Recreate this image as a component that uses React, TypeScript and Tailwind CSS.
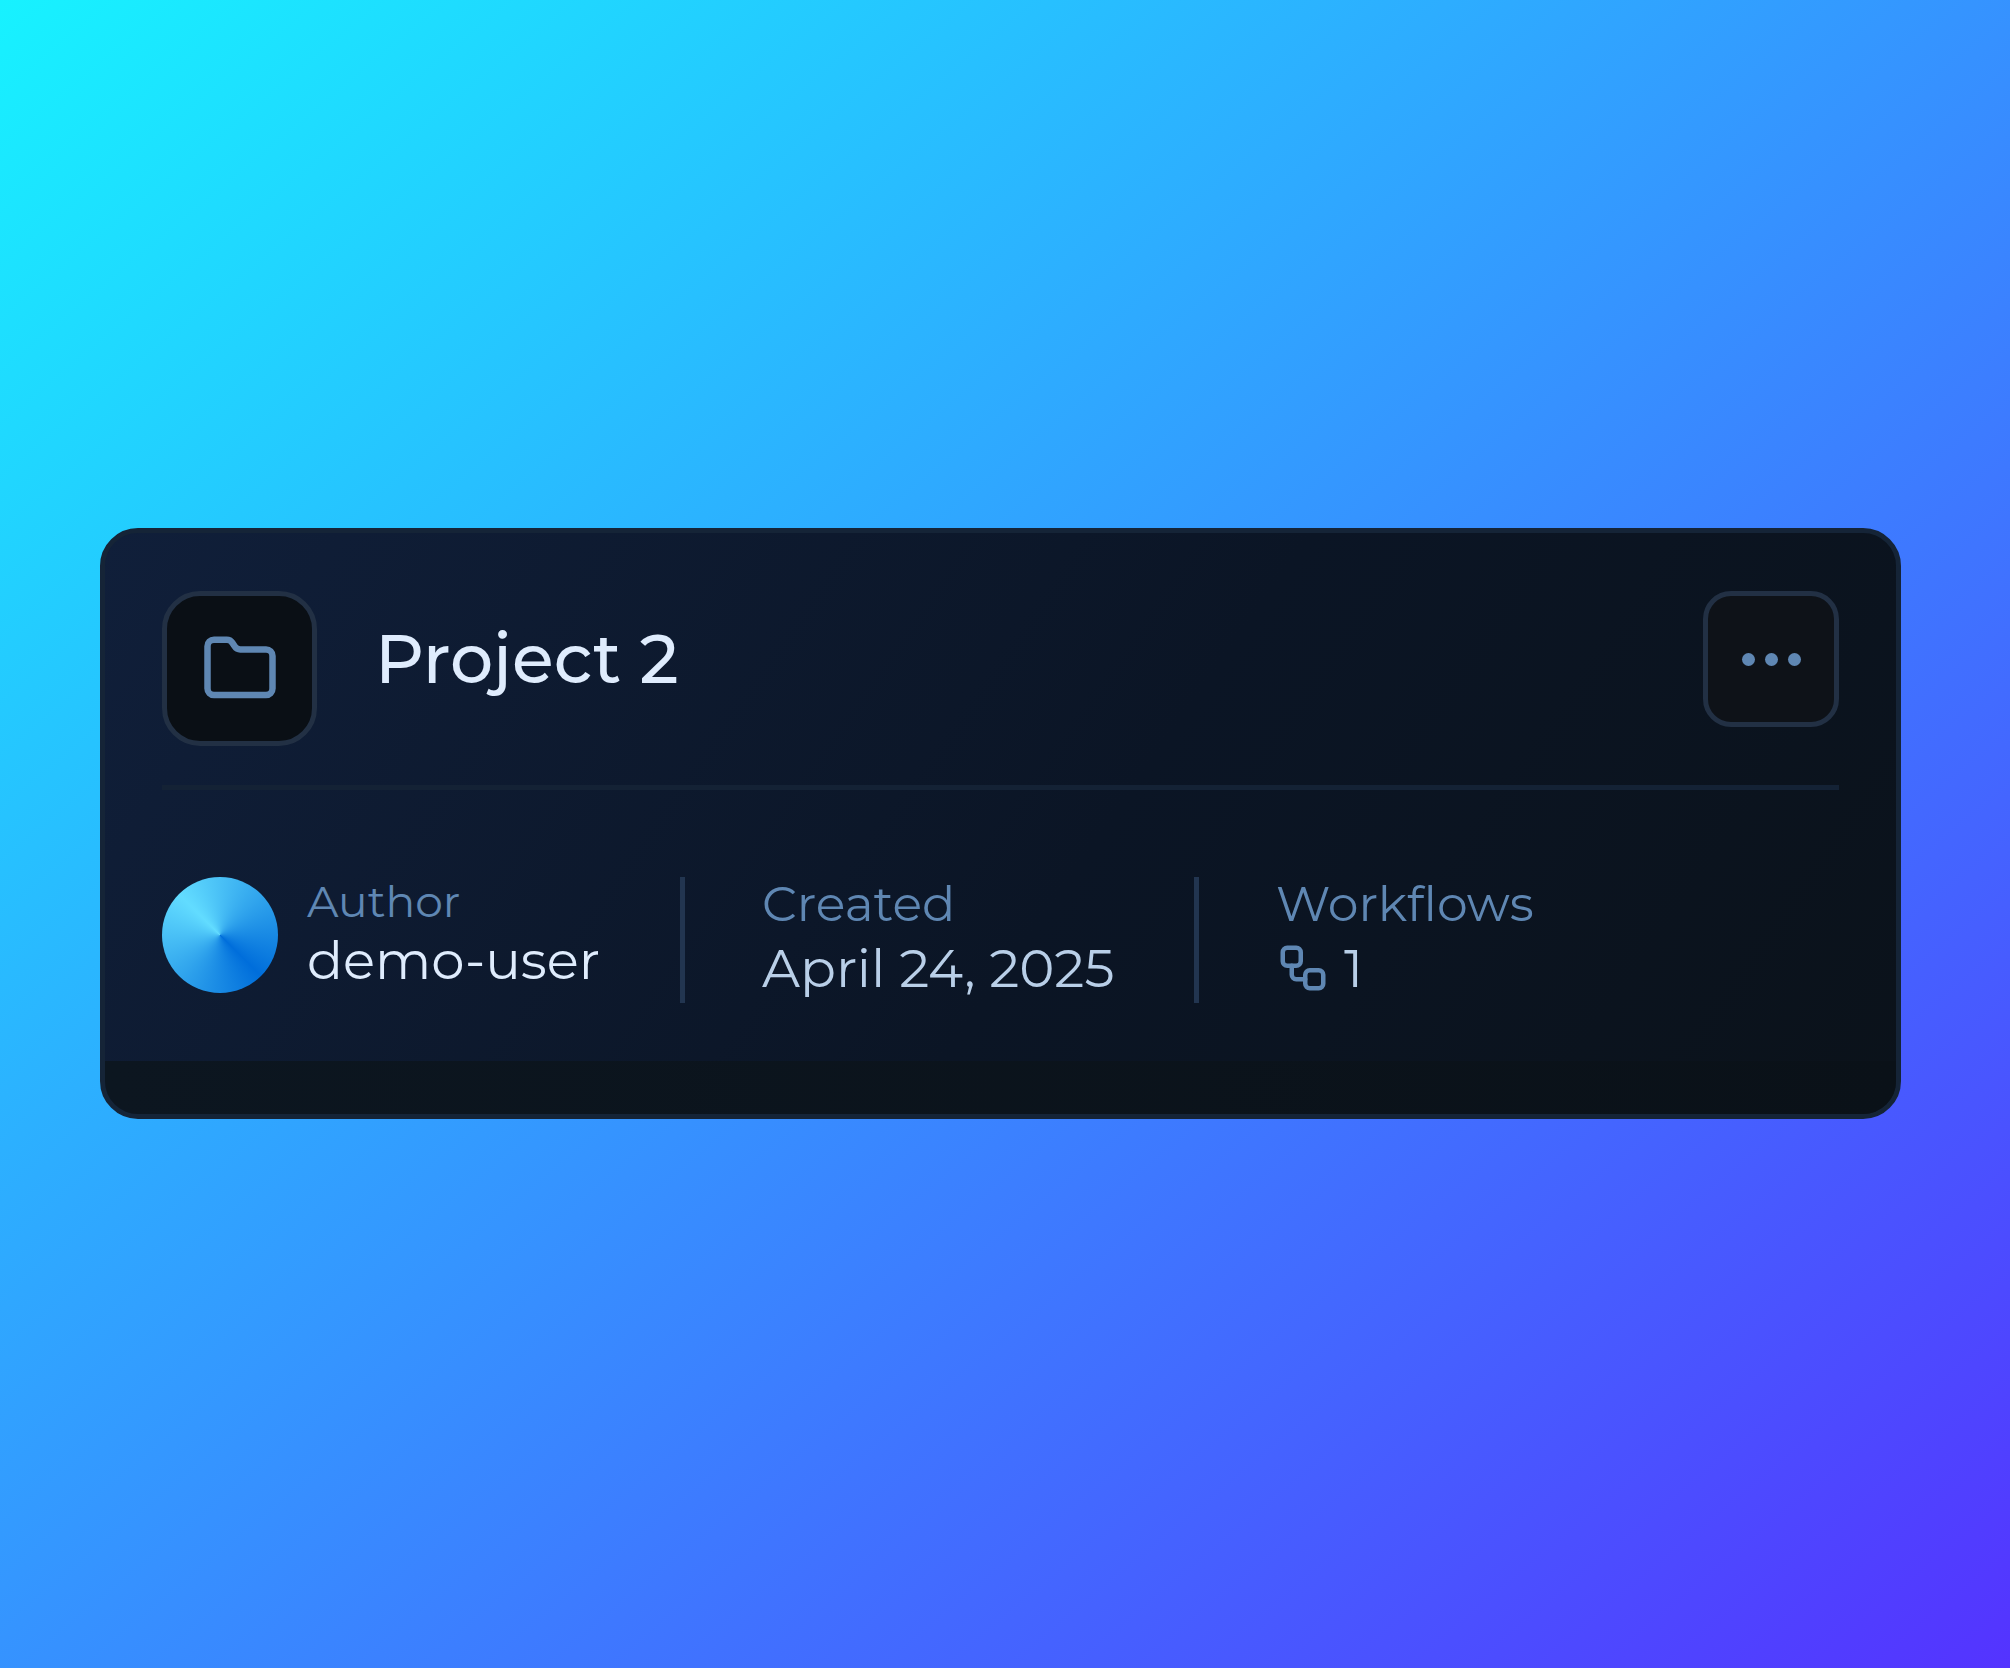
import type { ReactNode } from 'react';
import { Folder, Workflow } from 'lucide-react';

interface StatProps {
  label: string;
  children: ReactNode;
  className?: string;
}

function Stat({ label, children, className = '' }: StatProps) {
  return (
    <div className={`flex h-[126px] flex-col justify-center border-l-[5px] border-[#223550] pb-0.5 pl-[77px] ${className}`}>
      <dt className="text-[49px] leading-[58px] text-[#5f87b3]">{label}</dt>
      <dd className="flex items-center gap-3.5 text-[53px] leading-[70px] text-[#b9cfe8]">{children}</dd>
    </div>
  );
}

export default function App() {
  return (
    <main className="flex min-h-screen items-center bg-linear-to-br/srgb from-[#17f2ff] to-[#5433ff] pr-[109px] pb-[21px] pl-[100px] font-['Montserrat','Inter',sans-serif]">
      <article className="w-full overflow-hidden rounded-[38px] border-[5px] border-[#152437] bg-linear-[125deg] from-[#101f3a] via-[#0b1525] via-55% to-[#0b121a]">
        <div className="px-[57px] pt-[58px]">
          <header className="flex items-start border-b-[5px] border-[#142235] pb-[39px]">
            <div className="flex size-[155px] items-center justify-center rounded-[38px] border-[5px] border-[#223044] bg-[#0a0f15]">
              <Folder className="size-[78px] text-[#5f87b3]" />
            </div>
            <h2 className="ml-[58px] flex h-[136px] items-center text-[68px] leading-[80px] font-medium text-[#dfecfd]">
              Project 2
            </h2>
            <button
              type="button"
              aria-label="Project options"
              className="ml-auto flex size-[136px] items-center justify-center gap-[10px] rounded-[28px] border-[5px] border-[#223044] bg-[#0e1218]"
            >
              <span className="size-[13px] rounded-full bg-[#5f87b3]" />
              <span className="size-[13px] rounded-full bg-[#5f87b3]" />
              <span className="size-[13px] rounded-full bg-[#5f87b3]" />
            </button>
          </header>

          <dl className="flex items-start pt-[87px] pb-[58px]">
            <div className="flex w-[518px] items-start gap-[29px]">
              <div className="size-[116px] rounded-full bg-[conic-gradient(from_315deg,#62dcff,#006edb_50%,#62dcff)]" />
              <div>
                <dt className="text-[44px] leading-[48px] text-[#5f87b3]">Author</dt>
                <dd className="text-[53px] leading-[70px] text-[#dfecfd]">demo-user</dd>
              </div>
            </div>
            <Stat label="Created" className="w-[514px]">
              April 24, 2025
            </Stat>
            <Stat label="Workflows">
              <Workflow className="size-[54px] text-[#5f87b3]" />1
            </Stat>
          </dl>
        </div>
        <footer className="h-[53px] bg-linear-to-r from-[#0c1620] to-[#0a1118]" />
      </article>
    </main>
  );
}
